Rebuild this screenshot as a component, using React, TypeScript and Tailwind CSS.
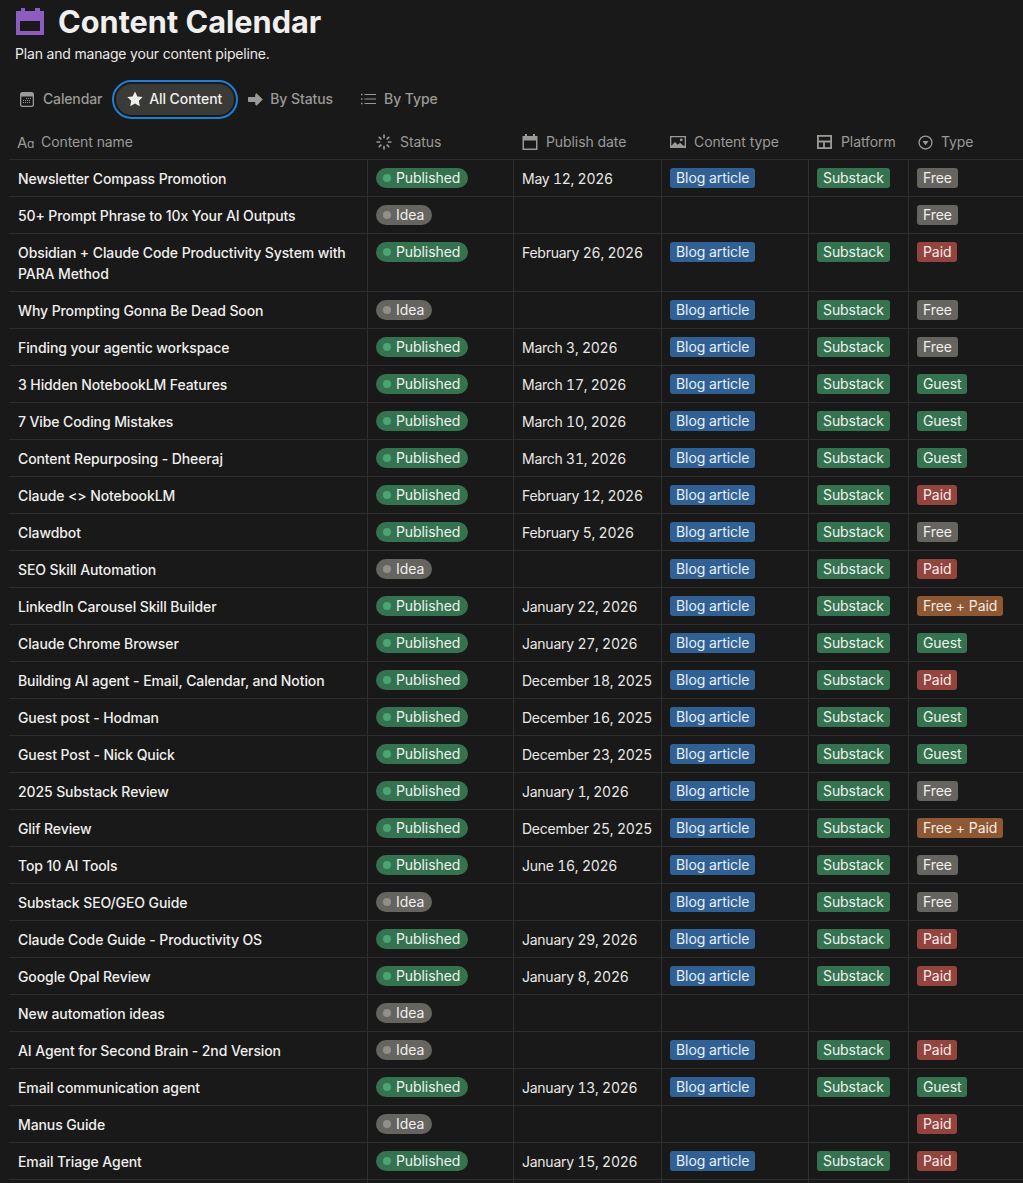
import React from "react";

type Row = { n: string; s: "P" | "I"; d?: string; c?: boolean; p?: boolean; t?: "Free" | "Paid" | "Guest" | "Free + Paid"; tall?: boolean };

const rows: Row[] = [
  { n: "Newsletter Compass Promotion", s: "P", d: "May 12, 2026", c: true, p: true, t: "Free" },
  { n: "50+ Prompt Phrase to 10x Your AI Outputs", s: "I", t: "Free" },
  { n: "Obsidian + Claude Code Productivity System with PARA Method", s: "P", d: "February 26, 2026", c: true, p: true, t: "Paid", tall: true },
  { n: "Why Prompting Gonna Be Dead Soon", s: "I", c: true, p: true, t: "Free" },
  { n: "Finding your agentic workspace", s: "P", d: "March 3, 2026", c: true, p: true, t: "Free" },
  { n: "3 Hidden NotebookLM Features", s: "P", d: "March 17, 2026", c: true, p: true, t: "Guest" },
  { n: "7 Vibe Coding Mistakes", s: "P", d: "March 10, 2026", c: true, p: true, t: "Guest" },
  { n: "Content Repurposing - Dheeraj", s: "P", d: "March 31, 2026", c: true, p: true, t: "Guest" },
  { n: "Claude <> NotebookLM", s: "P", d: "February 12, 2026", c: true, p: true, t: "Paid" },
  { n: "Clawdbot", s: "P", d: "February 5, 2026", c: true, p: true, t: "Free" },
  { n: "SEO Skill Automation", s: "I", c: true, p: true, t: "Paid" },
  { n: "LinkedIn Carousel Skill Builder", s: "P", d: "January 22, 2026", c: true, p: true, t: "Free + Paid" },
  { n: "Claude Chrome Browser", s: "P", d: "January 27, 2026", c: true, p: true, t: "Guest" },
  { n: "Building AI agent - Email, Calendar, and Notion", s: "P", d: "December 18, 2025", c: true, p: true, t: "Paid" },
  { n: "Guest post - Hodman", s: "P", d: "December 16, 2025", c: true, p: true, t: "Guest" },
  { n: "Guest Post - Nick Quick", s: "P", d: "December 23, 2025", c: true, p: true, t: "Guest" },
  { n: "2025 Substack Review", s: "P", d: "January 1, 2026", c: true, p: true, t: "Free" },
  { n: "Glif Review", s: "P", d: "December 25, 2025", c: true, p: true, t: "Free + Paid" },
  { n: "Top 10 AI Tools", s: "P", d: "June 16, 2026", c: true, p: true, t: "Free" },
  { n: "Substack SEO/GEO Guide", s: "I", c: true, p: true, t: "Free" },
  { n: "Claude Code Guide - Productivity OS", s: "P", d: "January 29, 2026", c: true, p: true, t: "Paid" },
  { n: "Google Opal Review", s: "P", d: "January 8, 2026", c: true, p: true, t: "Paid" },
  { n: "New automation ideas", s: "I" },
  { n: "AI Agent for Second Brain - 2nd Version", s: "I", c: true, p: true, t: "Paid" },
  { n: "Email communication agent", s: "P", d: "January 13, 2026", c: true, p: true, t: "Guest" },
  { n: "Manus Guide", s: "I", t: "Paid" },
  { n: "Email Triage Agent", s: "P", d: "January 15, 2026", c: true, p: true, t: "Paid" },
];

const Gray = "#9b9a97";

const HeaderIcon = ({ kind }: { kind: string }) => {
  if (kind === "aa")
    return (
      <span className="flex w-[18px] shrink-0 items-baseline text-[15px] leading-none tracking-[-0.3px] text-[#9b9a97]">
        A<span className="text-[12px]">ɑ</span>
      </span>
    );
  if (kind === "spin")
    return (
      <svg width="16" height="16" viewBox="0 0 16 16" fill="none" stroke={Gray} strokeWidth="1.7" strokeLinecap="round">
        <path d="M8 1.200v2.300M8 12.500v2.300M1.200 8h2.300M12.500 8h2.300M3.300 3.300l1.500 1.500M11.200 11.200l1.500 1.500M12.700 3.300l-1.500 1.500M4.800 11.200l-1.500 1.500" />
      </svg>
    );
  if (kind === "cal")
    return (
      <svg width="16" height="16" viewBox="0 0 16 16" fill={Gray}>
        <path fillRule="evenodd" d="M3 0h2v2h6V0h2v2h2.500v14H.5V2H3zM2 6.500V14.500h12V6.500z" />
      </svg>
    );
  if (kind === "img")
    return (
      <svg width="16" height="12" viewBox="0 0 16 12" fill={Gray}>
        <path fillRule="evenodd" d="M0 0h16v12H0zM1.300 1.300v8.400l3.700-3.700 2.700 2.700 2.300-2 3.500 3h1.200V1.300zM11.300 2.500a1.400 1.400 0 1 1 0 2.800 1.400 1.400 0 0 1 0-2.800z" />
      </svg>
    );
  if (kind === "plat")
    return (
      <svg width="15" height="14" viewBox="0 0 15 14" fill="none" stroke={Gray} strokeWidth="1.800">
        <rect x="0.900" y="0.900" width="13.200" height="12.200" />
        <path d="M1 6.500h13M7 6.500V13" />
      </svg>
    );
  return (
    <svg width="15" height="15" viewBox="0 0 16 16" fill="none">
      <circle cx="8" cy="8" r="6.900" stroke={Gray} strokeWidth="1.400" />
      <path d="M4.700 6.300h6.600L8 10.800z" fill={Gray} />
    </svg>
  );
};

const cols = "grid grid-cols-[358px_146px_148px_147px_100px_115px]";

const Status = ({ s }: { s: "P" | "I" }) =>
  s === "P" ? (
    <span className="inline-flex h-5 items-center gap-[5px] rounded-full bg-[#35724f] pl-[7px] pr-2 text-sm leading-5 text-[#eef4f0]">
      <span className="h-2 w-2 rounded-full bg-[#4aa574]" />
      Published
    </span>
  ) : (
    <span className="inline-flex h-5 items-center gap-[5px] rounded-full bg-[#65645f] pl-[7px] pr-2 text-sm leading-5 text-[#f0efed]">
      <span className="h-2 w-2 rounded-full bg-[#908f8b]" />
      Idea
    </span>
  );

const Tag = ({ label, cls }: { label: string; cls: string }) => (
  <span className={`inline-block h-5 whitespace-nowrap rounded-[3px] px-1.5 text-sm leading-5 ${cls}`}>{label}</span>
);

const typeCls: Record<string, string> = {
  Free: "bg-[#65645f] text-[#f0efed]",
  Paid: "bg-[#93443f] text-[#f7ebe9]",
  Guest: "bg-[#35724f] text-[#eef4f0]",
  "Free + Paid": "bg-[#8e5835] text-[#f6ebe2]",
};

const cell = "flex items-start border-l border-[#2f2f2f] pl-2 pt-2";

export default function App() {
  return (
    <div className="h-[1183px] overflow-hidden bg-[#191919] tracking-[-0.08px] text-[#f0efed]" style={{ fontFamily: "Inter, 'Liberation Sans', sans-serif" }}>
      <div className="flex h-[44px] items-center pl-4">
        <svg width="28" height="27" viewBox="0 0 28 27" className="mr-[14px] mt-[-1px]">
          <path fillRule="evenodd" fill="#8c5cbf" d="M5 0h4v3h10V0h5v3h4v24H0V3h5zM4 13v10h20V13z" />
        </svg>
        <h1 className="text-[30.7px] font-bold leading-[44px] tracking-normal text-[#f0efed]">Content Calendar</h1>
      </div>
      <p className="pl-[15px] text-sm leading-5 tracking-[-0.18px] text-[#e9e8e6]">Plan and manage your content pipeline.</p>

      <div className="mt-[15px] flex h-10 items-center pl-[20px] text-sm font-medium text-[#9b9a97]">
        <span className="flex items-center gap-[9px] tracking-[-0.15px]">
          <svg width="14" height="15" viewBox="0 0 14 15" fill="none">
            <path fillRule="evenodd" fill={Gray} d="M2.500 0h9A2.500 2.500 0 0 1 14 2.500v10a2.500 2.500 0 0 1-2.500 2.500h-9A2.500 2.500 0 0 1 0 12.500v-10A2.500 2.500 0 0 1 2.500 0zM1.300 4.500v8a1.200 1.200 0 0 0 1.200 1.200h9a1.200 1.200 0 0 0 1.200-1.200v-8z" />
            <path d="M6 6.500h1M8 6.500h1M10 6.500h1M3 8.500h1M5 8.500h1M7 8.500h1M9 8.500h1M3 10.500h1M5 10.500h1M7 10.500h1M9 10.500h1" stroke={Gray} strokeWidth="1" />
          </svg>
          Calendar
        </span>
        <span className="ml-[10px] flex h-[39px] w-[126px] items-center rounded-full border-2 border-[#1f7fd6] p-[2px]">
          <span className="flex h-full w-full items-center gap-[6px] rounded-full bg-[#3a3a37] pl-[11px] text-[#f0efed]">
            <svg width="16" height="16" viewBox="0 0 16 16" fill="#f0efed">
              <path d="M8 .5l2.400 4.900 5.300.7-3.900 3.700 1 5.400L8 12.600l-4.800 2.600 1-5.400L.3 6.100l5.300-.7z" />
            </svg>
            All Content
          </span>
        </span>
        <span className="ml-[10px] flex items-center gap-[7px]">
          <svg width="15" height="13" viewBox="0 0 15 13" fill={Gray}>
            <path d="M8.500 0.300l6.300 6.200-6.300 6.200-1.300-1.200V9H0.700a.7.7 0 0 1-.7-.7V4.700A.7.7 0 0 1 .7 4h6.500V1.500z" />
          </svg>
          By Status
        </span>
        <span className="ml-[28px] flex items-center gap-2">
          <svg width="15" height="12" viewBox="0 0 15 12" fill={Gray}>
            <path d="M0 .7h1.500v1.500H0zM3.500 1H15v1H3.500zM0 5.200h1.500v1.500H0zM3.500 5.500H15v1H3.500zM0 9.700h1.500v1.500H0zM3.500 10H15v1H3.500z" />
          </svg>
          By Type
        </span>
      </div>

      <div className="ml-[9px] mt-[4px]">
        <div className={`${cols} h-[37px] border-b border-[#2f2f2f] pt-[2px] text-sm leading-5 text-[#9b9a97]`}>
          {[
            ["aa", "Content name", "pl-2 gap-[6px]"],
            ["spin", "Status", "pl-[9px] gap-2"],
            ["cal", "Publish date", "pl-[9px] gap-2"],
            ["img", "Content type", "pl-[9px] gap-2"],
            ["plat", "Platform", "pl-[9px] gap-[9px]"],
            ["sel", "Type", "pl-[10px] gap-2"],
          ].map(([k, l, c]) => (
            <div key={l} className={`flex items-center ${c}`}>
              <HeaderIcon kind={k} />
              {l}
            </div>
          ))}
        </div>
        {rows.map((r) => (
          <div key={r.n} className={`${cols} border-b border-[#2f2f2f] text-sm leading-[21px] ${r.tall ? "h-[58px]" : "h-[37px]"}`}>
            <div className="px-[9px] pt-[8px] font-medium tracking-[-0.1px] text-[#f0efed]">
              <div className="max-w-[335px]">{r.n}</div>
            </div>
            <div className={cell}>
              <Status s={r.s} />
            </div>
            <div className={`${cell} tabular-nums tracking-[-0.25px] text-[#e9e8e6]`}>{r.d}</div>
            <div className={cell}>{r.c && <Tag label="Blog article" cls="bg-[#316194] text-[#e8f0f8]" />}</div>
            <div className={cell}>{r.p && <Tag label="Substack" cls="bg-[#35724f] text-[#eef4f0]" />}</div>
            <div className={cell}>{r.t && <Tag label={r.t} cls={typeCls[r.t]} />}</div>
          </div>
        ))}
        <div className={`${cols} h-[37px]`}>
          <div />
          <div className={cell} />
          <div className={cell} />
          <div className={cell} />
          <div className={cell} />
          <div className={cell} />
        </div>
      </div>
    </div>
  );
}
